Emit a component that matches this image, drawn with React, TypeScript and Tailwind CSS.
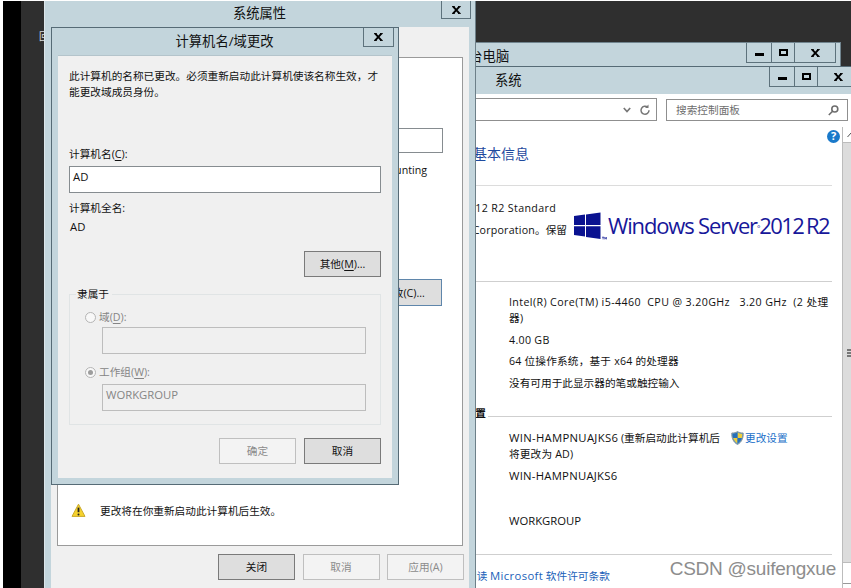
import type { ReactNode } from "react";
import clsx from "clsx";

function Key({ children }: { children: ReactNode }) {
  return <span className="underline underline-offset-2">{children}</span>;
}

function CloseIcon() {
  return (
    <svg width="9" height="8" viewBox="0 0 9 8" fill="none" stroke="#000" strokeWidth="1.9">
      <path d="M1.2 .6 7.4 7.4M7.4 .6 1.2 7.4" />
      <path d="M0 .6H2.8M6 .6H8.8M0 7.4H2.8M6 7.4H8.8" strokeWidth="1" />
    </svg>
  );
}

function CloseButton({ className }: { className?: string }) {
  return (
    <div className={clsx("flex items-center justify-center border border-t-0 border-[#5d727c]", className)}>
      <CloseIcon />
    </div>
  );
}

function CaptionButtons({ className }: { className?: string }) {
  return (
    <div className={clsx("flex h-5 border border-t-0 border-[#5d727c]", className)}>
      <div className="flex w-[25px] items-center justify-center border-r border-[#5d727c]">
        <div className="mt-[3px] h-[3px] w-[9px] bg-black" />
      </div>
      <div className="flex w-[23px] items-center justify-center border-r border-[#5d727c]">
        <div className="h-[7px] w-[9px] border-2 border-black" />
      </div>
      <div className="flex flex-1 items-center justify-center">
        <CloseIcon />
      </div>
    </div>
  );
}

function Button({ children, disabled, className }: { children: ReactNode; disabled?: boolean; className?: string }) {
  return (
    <div
      className={clsx(
        "flex h-[26px] w-[77px] items-center justify-center border",
        disabled ? "border-[#bfbfbf] bg-[#f3f3f3] text-[#8b8b8b]" : "border-[#7a7a7a] bg-[#dedede]",
        className
      )}
    >
      {children}
    </div>
  );
}

function Radio({ checked, children }: { checked?: boolean; children: ReactNode }) {
  return (
    <div className="flex h-4 items-center gap-[3px] text-[#858585]">
      <div className="flex size-[11px] items-center justify-center rounded-full border border-[#b5b5b5] bg-[#f8f8f8]">
        {checked && <div className="size-[5px] rounded-full bg-[#9d9d9d]" />}
      </div>
      <div>{children}</div>
    </div>
  );
}

function RenameDialog() {
  return (
    <div className="absolute top-[27px] left-[51px] flex h-[458px] w-[348px] flex-col border border-[#566b76] bg-[#c3d5dc]">
      <div className="flex h-[27px] shrink-0">
        <div className="w-[312px] pt-[3px] pl-[33px] text-center text-[13.3px] leading-[20px]">计算机名/域更改</div>
        <CloseButton className="-ml-px h-[19px] w-[31px]" />
      </div>
      <div className="mx-1.5 mb-1.5 flex flex-1 flex-col border-t border-[#b4c4cb] bg-[#f0f0f0] pl-[11px]">
        <div className="mt-[13px] h-[77px] leading-[15.5px]">
          此计算机的名称已更改。必须重新启动此计算机使该名称生效，才
          <br />
          能更改域成员身份。
        </div>
        <div className="h-[20px] leading-4">
          计算机名(<Key>C</Key>):
        </div>
        <div className="h-[27px] w-[312px] border border-[#868c90] bg-white pl-[3px] text-[11.3px] leading-[19px]">AD</div>
        <div className="mt-[7px] leading-4">计算机全名:</div>
        <div className="mt-[3px] pl-px text-[11.3px] leading-4">AD</div>
        <Button className="mt-4 ml-[235px]">
          <span>其他(<Key>M</Key>)...</span>
        </Button>
        <div className="mt-[17px] flex h-[131px] w-[312px] flex-col border border-[#e0e4e5] pl-[15px]">
          <div className="-mt-[9px] -ml-[9px] h-[23px] w-9 bg-[#f0f0f0] pl-px leading-4">隶属于</div>
          <Radio>
            域(<Key>D</Key>):
          </Radio>
          <div className="mt-[2px] ml-[17px] h-[27px] w-[264px] border border-[#bdbdbd]" />
          <div className="mt-[10px]">
            <Radio checked>
              工作组(<Key>W</Key>):
            </Radio>
          </div>
          <div className="mt-1 ml-[17px] h-[27px] w-[264px] border border-[#bdbdbd] pl-[3px] text-[11.3px] leading-5 text-[#858585]">
            WORKGROUP
          </div>
        </div>
        <div className="mt-[13px] ml-[150px] flex gap-2">
          <Button disabled>确定</Button>
          <Button>取消</Button>
        </div>
      </div>
    </div>
  );
}

function PropertiesWindow() {
  return (
    <div className="absolute top-px left-[44px] flex h-[587px] w-[432px] flex-col border-r border-l border-r-[#6d8089] border-l-[#dbe5e9] bg-[#c3d5dc]">
      <div className="flex h-[26px] shrink-0">
        <div className="w-[397px] pt-0.5 pl-8 text-center text-[13.3px] leading-5">系统属性</div>
        <CloseButton className="-ml-px h-[18px] w-[30px]" />
      </div>
      <div className="mx-1.5 flex-1 bg-[#f0f0f0] pt-[30px] pl-1.5">
        <div className="flex h-[489px] w-[406px] flex-col border border-[#9a9a9a] bg-white">
          <div className="mt-[70px] ml-[140px] h-[25px] w-[245px] border border-[#868c90]" />
          <div className="mt-[9px] w-[369px] text-right leading-4">&quot;Mary&apos;s Computer&quot; or &quot;Accounting</div>
          <div className="mt-[101px] ml-[307px] flex h-[27px] w-[77px] items-center justify-center border border-[#5f86ab] bg-[#dedede]">
            更改(C)...
          </div>
          <div className="mt-[196px] flex items-center gap-[14px] pl-[13px]">
            <svg width="15" height="15" viewBox="0 0 15 15">
              <path d="M7.5 1.2 14 13.4H1Z" fill="#f6d22d" stroke="#c9a92c" strokeLinejoin="round" />
              <path d="M7.5 4.6V9.2" stroke="#222" strokeWidth="1.8" />
              <circle cx="7.5" cy="11.4" r="1" fill="#222" />
            </svg>
            <div className="pt-px leading-4">更改将在你重新启动此计算机后生效。</div>
          </div>
        </div>
        <div className="mt-2 ml-[161px] flex gap-[7.5px]">
          <Button>关闭</Button>
          <Button disabled>取消</Button>
          <Button disabled>应用(A)</Button>
        </div>
      </div>
    </div>
  );
}

function WindowsLogo() {
  return (
    <div className="flex text-[#17179a]">
      <svg width="33" height="28" viewBox="0 0 33 28" fill="#0a1290" className="shrink-0">
        <path d="M0 4.1 11 2.6V13H0ZM12 2.4 26.5.4V13H12ZM0 14.2H11V24.6L0 23ZM12 14.2H26.5V27L12 24.9Z" />
        <path d="M28 25.2H30.2M29.1 25.2V27.4M30.8 27.4V25.3L31.6 26.5 32.4 25.3V27.4" fill="none" stroke="#0a1290" strokeWidth=".7" />
      </svg>
      <div className="ml-px text-[22px] leading-[27px] tracking-[-1.15px] whitespace-nowrap">
        Windows Server<span className="align-[3px] text-[8px]">°</span>
        <span className="tracking-[-1.55px] [word-spacing:-1.5px]">2012 R2</span>
      </div>
    </div>
  );
}

function Shield() {
  return (
    <svg width="13" height="14" viewBox="0 0 13 14">
      <path d="M6.5.5C8 1.6 10 2 12.2 2c.3 5-1.5 9.2-5.7 11.5C2.3 11.2.5 7 .8 2 3 2 5 1.6 6.5.5Z" fill="#4d8fc9" stroke="#8c989f" />
      <path d="M6.5 1.6C8 2.5 9.5 2.9 11.3 3c0 1.5-.1 2.7-.5 4H6.5ZM2.2 7H6.5V12.4C4.3 11 3 9.2 2.2 7Z" fill="#f0ce3c" />
      <path d="M1.7 3C3.5 2.9 5 2.5 6.5 1.6V7H2.2C1.8 5.7 1.7 4.5 1.7 3ZM6.5 7H10.8C10 9.2 8.7 11 6.5 12.4Z" fill="#2870b8" />
    </svg>
  );
}

function SystemWindow() {
  return (
    <div className="absolute top-[66px] left-[440px] flex h-[522px] w-[411px] flex-col border-t border-[#566b76] bg-white">
      <div className="flex h-[27px] shrink-0 bg-[#c3d5dc]">
        <div className="w-[329px] shrink-0 pt-[3px] pl-[55px] text-[13.3px] leading-5">系统</div>
        <CaptionButtons className="w-[90px] shrink-0" />
      </div>
      <div className="flex h-[33px] shrink-0 gap-[9px] pt-1">
        <div className="flex h-[23px] w-[217px] items-center justify-end gap-2 border border-[#8f8f8f] pr-[5px] text-[#777]">
          <svg width="8" height="6" viewBox="0 0 8 6" fill="none" stroke="currentColor" strokeWidth="1.7">
            <path d="M.8 1 4 4.5 7.2 1" />
          </svg>
          <svg width="12" height="12" viewBox="0 0 12 12" fill="none" stroke="currentColor" strokeWidth="1.5">
            <path d="M8.8 3.4A4 4 0 1 0 10 6.2" />
            <path d="M9.5 .5V4H6Z" fill="currentColor" stroke="none" />
          </svg>
        </div>
        <div className="mt-px flex h-[22px] w-[182px] items-center justify-between border border-[#8f8f8f] pr-2 pl-[9px] text-[#6d6d6d]">
          <span>搜索控制面板</span>
          <svg width="11" height="11" viewBox="0 0 11 11" fill="none" stroke="currentColor" strokeWidth="1.6">
            <circle cx="6.8" cy="4" r="3" />
            <path d="M4.6 6.2 .8 10" />
          </svg>
        </div>
      </div>
      <div className="flex flex-1">
        <div className="flex w-[402px] shrink-0 flex-col">
          <div className="flex h-[59px] w-[392px] border-b border-[#dcdcdc]">
            <div className="w-[387px] shrink-0 pt-[17px] pl-[19px] text-[14px] leading-5 text-[#1f4a9e]">的基本信息</div>
            <div className="mt-[3px] flex size-[13px] shrink-0 items-center justify-center rounded-full bg-[#1979ca] text-[11px] font-bold text-white">?</div>
          </div>
          <div className="flex h-[96px] w-[392px] border-b border-[#cfcfcf]">
            <div className="w-[134px] shrink-0 pt-[14px]">
              <div className="w-[116px] text-right leading-4 tracking-[0.35px] whitespace-nowrap">2012 R2 Standard</div>
              <div className="mt-[6px] ml-[-7px] w-[134px] text-right leading-4 whitespace-nowrap">
                <span className="tracking-[0.2px]">Corporation</span>。保留
              </div>
            </div>
            <div className="pt-[26px]">
              <WindowsLogo />
            </div>
          </div>
          <div className="flex h-[135px] w-[392px] flex-col border-b border-[#cfcfcf] pt-[13px] pl-[69px]">
            <div className="h-[37px] leading-[15.5px] tracking-[0.39px] whitespace-pre">{"Intel(R) Core(TM) i5-4460  CPU @ 3.20GHz   3.20 GHz  (2 处理\n器)"}</div>
            <div className="h-[21px] leading-4 tracking-[0.3px]">4.00 GB</div>
            <div className="h-[22px] leading-4 tracking-[0.18px]">64 位操作系统，基于 x64 的处理器</div>
            <div className="leading-4">没有可用于此显示器的笔或触控输入</div>
            <div className="mt-auto mb-[-4px] ml-[-51px] w-[30px] bg-white pr-0.5 text-right leading-[14px] font-bold">设置</div>
          </div>
          <div className="h-[138px] w-[392px] border-b border-[#cfcfcf] pt-[13px] pl-[69px]">
            <div className="flex h-[38px] gap-[9px]">
              <div className="w-[213px] leading-[15.5px] whitespace-nowrap">
                <span className="text-[11.3px] tracking-[0.3px]">WIN-HAMPNUAJKS6</span> (重新启动此计算机后
                <br />
                <span className="tracking-[0.15px]">将更改为 AD)</span>
              </div>
              <div className="flex h-4 items-center gap-px text-[#1a6fc9]">
                <Shield />
                <span className="whitespace-nowrap">更改设置</span>
              </div>
            </div>
            <div className="h-[45px] text-[11.3px] leading-4 tracking-[0.25px]">WIN-HAMPNUAJKS6</div>
            <div className="text-[11.3px] leading-4">WORKGROUP</div>
          </div>
          <div className="pt-[13px] pl-[26px] leading-4 text-[#1a5fb9]">
            阅读 <span className="text-[11.3px] tracking-[0.35px]">Microsoft</span> 软件许可条款
          </div>
        </div>
        <div className="flex min-w-0 flex-1 flex-col border-l border-[#bcbcbc] bg-[#dcdcdc]">
          <div className="flex h-4 items-center overflow-hidden border-b border-[#bcbcbc] bg-white pl-1">
            <svg width="8" height="6" viewBox="0 0 8 6" fill="none" stroke="#555" className="shrink-0">
              <path d="M.5 5 4 1 7.5 5" />
            </svg>
          </div>
          <div className="mt-[205px] flex h-[9px] flex-col items-end gap-px pt-px">
            <div className="h-0.5 w-1 bg-[#777]" />
            <div className="h-0.5 w-1 bg-[#777]" />
            <div className="h-0.5 w-1 bg-[#777]" />
          </div>
          <div className="mt-auto h-[26px] border-t border-[#bcbcbc] bg-white">
            <div className="h-[21px] border-b border-[#999]" />
          </div>
        </div>
      </div>
    </div>
  );
}

export default function App() {
  return (
    <div className="relative h-[588px] w-[851px] overflow-hidden bg-white pt-px pl-[3px] font-['Open_Sans','Noto_Sans_CJK_SC',sans-serif] text-[10.67px] text-[#111]">
      <div className="h-full border-l-[18px] border-black bg-[#2f2f2f]">
        <div className="pt-[29px] pl-[18px] text-[10px] leading-3 text-[#ddd]">回收站</div>
      </div>

      <div className="absolute top-[42px] left-[440px] flex h-[546px] w-[401px] border-t border-r border-[#71858f] bg-[#c3d5dc]">
        <div className="w-[306px] shrink-0 pt-[3px] pl-[16px] text-[13.3px] leading-5">这台电脑</div>
        <CaptionButtons className="w-[90px] shrink-0" />
      </div>

      <SystemWindow />
      <PropertiesWindow />
      <RenameDialog />

      <div className="absolute right-[15px] bottom-[7px] font-['Liberation_Sans',sans-serif] text-[19px] leading-6 tracking-[-0.25px] text-[#8d8d8d] [text-shadow:1px_1px_0_#fff]">
        CSDN @suifengxue
      </div>
    </div>
  );
}
